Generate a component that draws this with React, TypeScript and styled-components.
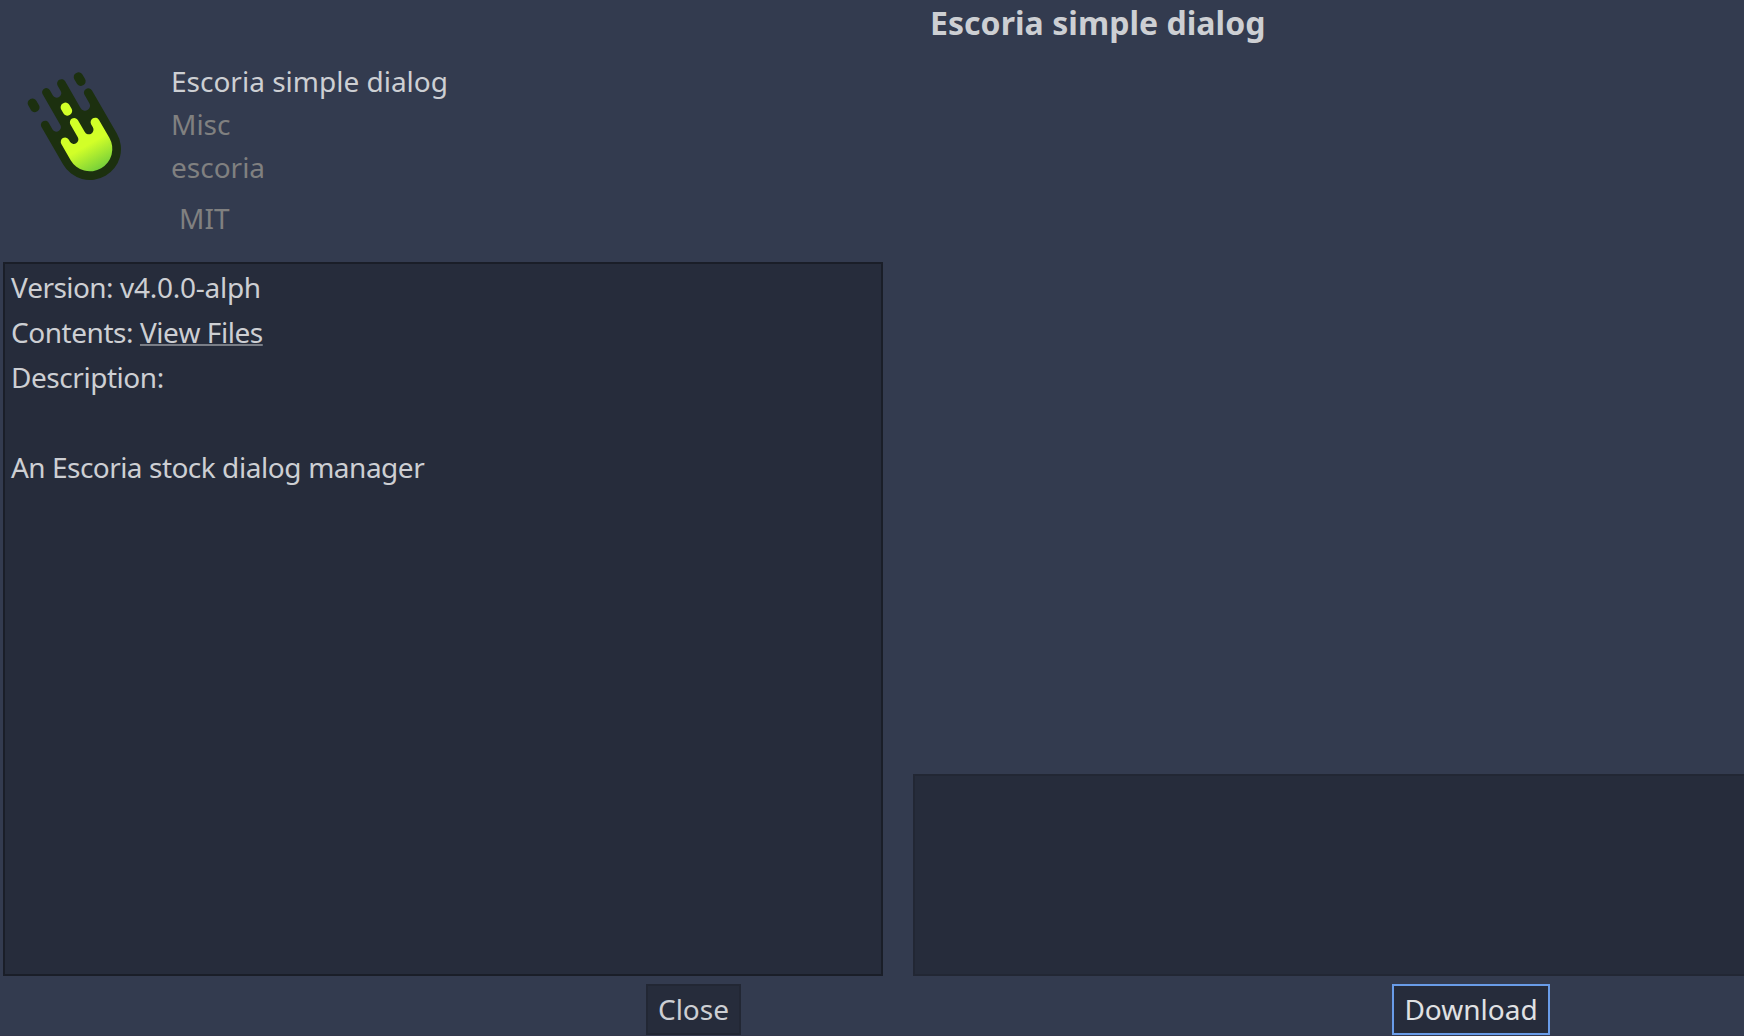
import React from "react";
import styled, { createGlobalStyle } from "styled-components";

const GlobalStyle = createGlobalStyle`
  * { box-sizing: border-box; }
  body {
    margin: 0;
    background: #333b4f;
    font-family: "Noto Sans", sans-serif;
    font-size: 28px;
    color: #cdcfd3;
  }
`;

const Window = styled.main`
  display: flex;
  flex-direction: column;
  width: 1744px;
  height: 1036px;
  overflow: hidden;
  background: #333b4f;
  border-bottom: 1px solid #34384c;
  white-space: nowrap;
`;

const TitleBar = styled.header`
  height: 50px;
  padding-left: 930px;
`;

const Title = styled.h1`
  margin: 0;
  font-size: 32px;
  line-height: 46px;
  font-weight: 700;
  letter-spacing: 0.04px;
`;

const Body = styled.div`
  display: flex;
  gap: 30px;
  height: 926px;
  padding-left: 3px;
`;

const Details = styled.section`
  display: flex;
  flex-direction: column;
  width: 880px;
`;

const AssetHeader = styled.div`
  display: flex;
  height: 212px;
`;

const IconSlot = styled.div`
  width: 168px;
  padding: 20px 0 0 22px;
`;

const Meta = styled.div`
  display: flex;
  flex-direction: column;
  padding-top: 10px;
`;

const MetaLine = styled.div<{ $muted?: boolean }>`
  height: 43px;
  line-height: 43px;
  color: ${(p) => (p.$muted ? "#808080" : "#cdcfd3")};
`;

const License = styled(MetaLine)`
  padding-left: 8px;
  margin-top: 8px;
`;

const Panel = styled.div<{ $edge: string }>`
  background: #262c3b;
  border: 2px solid ${(p) => p.$edge};
`;

const Description = styled(Panel)`
  flex: 1;
  padding: 1px 6px;
`;

const Line = styled.p<{ $tracking?: number }>`
  margin: 0;
  height: 45px;
  line-height: 45px;
  font-kerning: none;
  letter-spacing: ${(p) => p.$tracking ?? -0.45}px;
`;

const Word = styled.span<{ $tracking: number }>`
  letter-spacing: ${(p) => p.$tracking}px;
`;

const FilesLink = styled.a`
  text-decoration: underline;
  text-decoration-color: #7a7e87;
  text-decoration-thickness: 2px;
  text-underline-offset: 1px;
  text-decoration-skip-ink: none;
`;

const Preview = styled.section`
  display: flex;
  flex-direction: column;
  justify-content: flex-end;
  flex: 1;
`;

const Thumbnails = styled(Panel)`
  height: 202px;
  border-right: 0;
`;

const Footer = styled.footer`
  display: flex;
  gap: 651px;
  padding: 8px 0 0 646px;
`;

const Button = styled.button<{ $width: number; $focused?: boolean }>`
  width: ${(p) => p.$width}px;
  height: 51px;
  padding: 0 0 1px;
  border: 2px solid ${(p) => (p.$focused ? "#699ce8" : "#222734")};
  border-radius: 0;
  background: #262c3b;
  color: ${(p) => (p.$focused ? "#e0e1e3" : "#cdcfd3")};
  font: 28px/46px "Noto Sans", sans-serif;
`;

const CometIcon = () => (
  <svg width="100" height="120" viewBox="75 60 300 360" aria-hidden="true">
    <defs>
      <linearGradient id="glow" gradientUnits="userSpaceOnUse" x1="0" y1="-14" x2="0" y2="76">
        <stop offset="0" stopColor="#d2ff28" />
        <stop offset="1" stopColor="#6cca3c" />
      </linearGradient>
    </defs>
    <g transform="translate(270 297) rotate(-30)">
      <g fill="#1c300f">
        <path d="M-93 0V-130a12.500 12.500 0 0 1 25 0V-107a13.500 13.500 0 0 0 27 0V-213a12.500 12.500 0 0 1 25 0V-195a13.500 13.500 0 0 0 27 0V-213a13 13 0 0 1 26 0V-120a15 15 0 0 0 30 0V-149a13 13 0 0 1 26 0V0A93 93 0 0 1 -93 0Z" />
        <rect x="-95" y="-219" width="28" height="42" rx="13" />
        <rect x="64" y="-218" width="28" height="42" rx="13" />
      </g>
      <rect x="-15.500" y="-159" width="28" height="40" rx="13" fill="#d2ff28" />
      <path
        fill="url(#glow)"
        d="M-67 0V-56a13 13 0 0 1 26 0V-49a13.500 13.500 0 0 0 27 0V-93a13 13 0 0 1 26 0V-52a14 14 0 0 0 28 0V-62a13.500 13.500 0 0 1 27 0V0A67 67 0 0 1 -67 0Z"
      />
    </g>
  </svg>
);

export default function App() {
  return (
    <Window>
      <GlobalStyle />
      <TitleBar>
        <Title>Escoria simple dialog</Title>
      </TitleBar>
      <Body>
        <Details>
          <AssetHeader>
            <IconSlot>
              <CometIcon />
            </IconSlot>
            <Meta>
              <MetaLine>Escoria simple dialog</MetaLine>
              <MetaLine $muted>Misc</MetaLine>
              <MetaLine $muted>escoria</MetaLine>
              <License $muted>MIT</License>
            </Meta>
          </AssetHeader>
          <Description $edge="#1a1e28">
            <Line>
              <Word $tracking={-0.56}>Version:</Word> <Word $tracking={-0.25}>v4.0.0-alph</Word>
            </Line>
            <Line>
              Contents: <FilesLink>View Files</FilesLink>
            </Line>
            <Line>Description:</Line>
            <Line />
            <Line $tracking={-0.28}>
              <Word $tracking={-0.6}>An</Word> <Word $tracking={-0.55}>Escoria</Word>{" "}
              <Word $tracking={-0.57}>stock</Word> <Word $tracking={-0.42}>dialog</Word>{" "}
              <Word $tracking={-0.48}>manager</Word>
            </Line>
          </Description>
        </Details>
        <Preview>
          <Thumbnails $edge="#222734" />
        </Preview>
      </Body>
      <Footer>
        <Button $width={95}>Close</Button>
        <Button $width={158} $focused>
          Download
        </Button>
      </Footer>
    </Window>
  );
}
